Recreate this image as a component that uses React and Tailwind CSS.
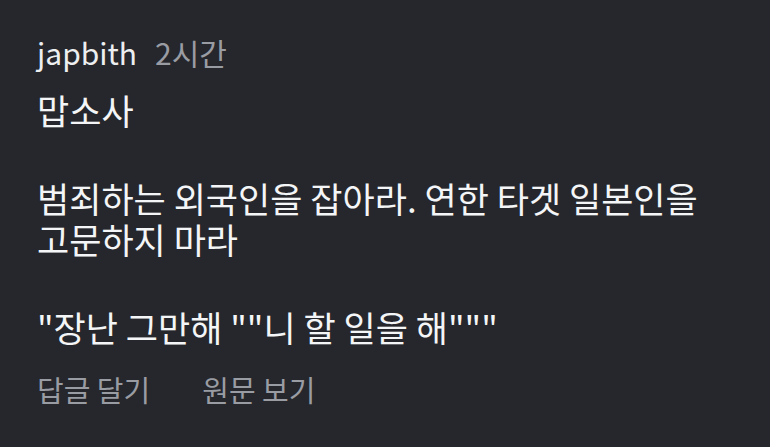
import React from "react";

export default function App() {
  return (
    <div
      className="w-[770px] h-[447px] bg-[#25272c] text-white overflow-hidden"
      style={{ fontFamily: '"Noto Sans CJK KR", "Noto Sans", sans-serif' }}
    >
      <div className="pl-[37px] pt-[30px]">
        {/* header */}
        <div className="flex items-baseline gap-[18px] text-[30px] leading-[44px]">
          <span className="text-[#eceef0]">japbith</span>
          <span className="text-[#9a9ca3]">2시간</span>
        </div>

        {/* comment body */}
        <div className="mt-[15px] text-[35px] leading-[41px] text-[#f4f5f6] flex flex-col gap-[47px]">
          <p>맙소사</p>
          <p className="flex flex-col">
            <span>범죄하는 외국인을 잡아라. 연한 타겟 일본인을</span>
            <span>고문하지 마라</span>
          </p>
          <p>"장난 그만해 ""니 할 일을 해"""</p>
        </div>

        {/* actions */}
        <div className="mt-[22px] flex gap-[52px] text-[29px] leading-[40px] text-[#9a9ca3]">
          <span>답글 달기</span>
          <span>원문 보기</span>
        </div>
      </div>
    </div>
  );
}
